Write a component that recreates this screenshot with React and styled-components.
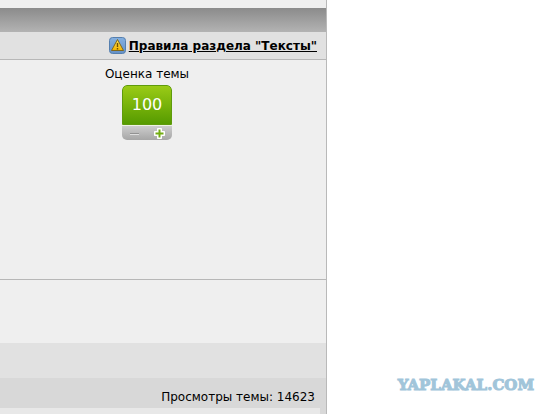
import React from "react";
import styled, { createGlobalStyle } from "styled-components";

const GlobalStyle = createGlobalStyle`
  * { box-sizing: border-box; }
  body {
    margin: 0;
    background: #fff;
    color: #000;
    font: 12px/16px Verdana, "DejaVu Sans", sans-serif;
  }
`;

const Page = styled.div`
  display: grid;
  grid-template-columns: minmax(0, 1fr) 232px;
  min-height: 100vh;
  overflow: hidden;
`;

const Forum = styled.main`
  display: flex;
  flex-direction: column;
  background: #efefef;
  border-right: 1px solid #b9b9b9;
`;

const TitleBar = styled.header`
  height: 24px;
  margin-top: 8px;
  background: linear-gradient(#8b8b8b, #b3b3b3);
`;

const RulesBar = styled.nav`
  display: flex;
  align-items: center;
  justify-content: flex-end;
  height: 28px;
  padding-right: 9px;
  background: #e1e1e1;
  border-bottom: 1px solid #b7b7b7;
`;

const RulesLink = styled.a`
  display: flex;
  align-items: center;
  gap: 3px;
  color: #000;
  font-weight: bold;
  white-space: nowrap;
  text-decoration: underline;
`;

const RatingSection = styled.section`
  display: flex;
  flex-direction: column;
  align-items: flex-end;
  height: 220px;
  padding: 6px 128px 0 0;
  border-bottom: 1px solid #b7b7b7;
`;

const Rating = styled.div`
  display: flex;
  flex-direction: column;
  align-items: center;
  width: 102px;
  gap: 3px;
  white-space: nowrap;
`;

const RatingCard = styled.div`
  width: 50px;
  height: 55px;
  overflow: hidden;
  border-radius: 5px;
`;

const Score = styled.output`
  display: flex;
  align-items: center;
  justify-content: center;
  height: 40px;
  border: 1px solid #5f9b0c;
  border-radius: 5px 5px 0 0;
  background: linear-gradient(#9acb16, #569b00);
  color: #fff;
  font-size: 16px;
`;

const Votes = styled.div`
  display: grid;
  grid-template-columns: 1fr 1fr;
  height: 15px;
  border-top: 1px solid #edf3e3;
  background: linear-gradient(#cdcdcd, #a6a6a6);
`;

const VoteButton = styled.button`
  display: flex;
  align-items: center;
  justify-content: center;
  padding: 0;
  border: 0;
  background: none;
`;

const Spacer = styled.div`
  height: 63px;
`;

const Toolbar = styled.div`
  height: 35px;
  background: #e1e1e1;
`;

const Views = styled.div`
  height: 30px;
  padding: 11px 11px 0 0;
  background: #d8d8d8;
  text-align: right;
  white-space: nowrap;
`;

const NextRow = styled.div`
  flex: 1;
  min-height: 6px;
  background: #e8e8e8;
  border-right: 6px solid #d8d8d8;
`;

const Aside = styled.aside`
  display: flex;
  align-items: flex-end;
  justify-content: flex-end;
  padding: 0 25px 20px 0;
`;

const Brand = styled.span`
  color: #a1c5da;
  font: bold 15px/18px "DejaVu Serif", serif;
  -webkit-text-stroke: 1px #a1c5da;
`;

const WarningIcon = () => (
  <svg width="17" height="17" viewBox="0 0 17 17" aria-hidden="true">
    <defs>
      <linearGradient id="warnBlue" x2="0" y2="1">
        <stop stopColor="#84b0e0" />
        <stop offset="1" stopColor="#6591c8" />
      </linearGradient>
      <linearGradient id="warnGold" x2="0" y2="1">
        <stop stopColor="#ffe25a" />
        <stop offset="1" stopColor="#f2b400" />
      </linearGradient>
    </defs>
    <rect x=".5" y=".5" width="16" height="16" rx="3" fill="url(#warnBlue)" stroke="#557fae" />
    <path d="M8.5 2.5 14.5 13.5H2.5Z" fill="url(#warnGold)" stroke="#80681c" strokeLinejoin="round" />
    <path d="M8.5 6v4M8.5 11v1.5" stroke="#705000" strokeWidth="1.4" />
  </svg>
);

const MinusIcon = () => (
  <svg width="11" height="11" viewBox="0 0 11 11" aria-hidden="true">
    <path d="M1 5.5h9" stroke="#929292" />
    <path d="M1 6.5h9" stroke="#dedede" />
  </svg>
);

const PlusIcon = () => (
  <svg width="11" height="11" viewBox="0 0 11 11" aria-hidden="true">
    <path d="M3.5.5h4v3h3v4h-3v3h-4v-3h-3v-4h3Z" fill="#fff" stroke="#fff" strokeLinejoin="round" />
    <path d="M5.5 1.5v8M1.5 5.5h8" stroke="#72ac12" strokeWidth="2" />
  </svg>
);

export default function App() {
  return (
    <>
      <GlobalStyle />
      <Page>
        <Forum>
          <TitleBar />
          <RulesBar>
            <RulesLink href="#rules">
              <WarningIcon />
              <span>Правила раздела "Тексты"</span>
            </RulesLink>
          </RulesBar>
          <RatingSection>
            <Rating>
              <span>Оценка темы</span>
              <RatingCard>
                <Score aria-label="Оценка темы">100</Score>
                <Votes>
                  <VoteButton type="button" aria-label="Минус"><MinusIcon /></VoteButton>
                  <VoteButton type="button" aria-label="Плюс"><PlusIcon /></VoteButton>
                </Votes>
              </RatingCard>
            </Rating>
          </RatingSection>
          <Spacer />
          <Toolbar />
          <Views>Просмотры темы: 14623</Views>
          <NextRow />
        </Forum>
        <Aside><Brand>YAPLAKAL.COM</Brand></Aside>
      </Page>
    </>
  );
}
